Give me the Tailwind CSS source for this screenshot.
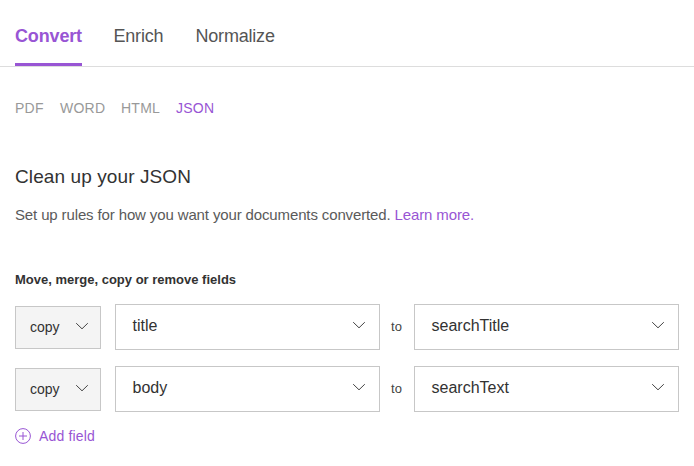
<!DOCTYPE html>
<html lang="en"><head><meta charset="utf-8"><title>Convert</title>
<script src="https://cdn.jsdelivr.net/npm/@tailwindcss/browser@4"></script></head>
<body class="w-[694px] h-[466px] overflow-hidden bg-white font-['Liberation_Sans',Arial,sans-serif] text-[#555]">
<svg class="hidden"><symbol id="chevron" viewBox="0 0 14 8"><path d="M1.2 1.2L7 6.8l5.8-5.6" fill="none" stroke="#444" stroke-width="1"/></symbol></svg>
<nav class="flex h-[67px] border-b border-[#ddd] pl-[15px] text-[18px] leading-[20px] tracking-[-0.2px]">
<a class="w-[67px] h-[66px] pt-[26px] font-bold tracking-[-0.15px] text-[#9855d4] border-b-3 border-[#9855d4]">Convert</a>
<a class="ml-[31.5px] w-[50.5px] pt-[26px]">Enrich</a><a class="ml-[31.5px] pt-[26px]">Normalize</a></nav>
<div class="flex pl-[15px] mt-[33px] text-[14px] leading-4 text-[#999] tracking-[0.25px]"><a class="w-[45px]">PDF</a><a class="w-[61px]">WORD</a><a class="w-[55px]">HTML</a><a class="text-[#9855d4]">JSON</a></div>
<h1 class="ml-[15px] mt-[49px] text-[19px] leading-6 tracking-[0.1px] text-[#323232]">Clean up your JSON</h1>
<p class="ml-[15px] mt-[16px] text-[15px] leading-5 tracking-[-0.13px] text-[#5a5a5a]">Set up rules for how you want your documents converted. <a class="text-[#9855d4]">Learn more.</a></p>
<h2 class="ml-[15px] mt-[47px] text-[13px] leading-4 font-bold text-[#323232]">Move, merge, copy or remove fields</h2>
<section class="mt-4 ml-[15px] w-[664px] flex flex-col gap-4 text-[#323232]">
<div class="flex h-[46px]">
<div class="mt-[2px] h-[43px] w-[86px] border border-[#c7c7c7] bg-[#f4f4f4] flex items-center justify-between pl-[14px] pr-[11px] text-[14px]"><span>copy</span><svg class="w-[14px] h-2 mb-[3px]"><use href="#chevron"/></svg></div>
<div class="ml-[14px] w-[265px] border border-[#c7c7c7] flex items-center justify-between pl-[16.5px] pr-[13px] text-[16px]"><span class="mb-[3px]">title</span><svg class="w-[14px] h-2 mb-[4px]"><use href="#chevron"/></svg></div>
<span class="w-[34px] pr-px text-center text-[13px] leading-[46px] text-[#444]">to</span>
<div class="w-[265px] border border-[#c7c7c7] flex items-center justify-between pl-[16.5px] pr-[13px] text-[16px]"><span class="mb-[3px]">searchTitle</span><svg class="w-[14px] h-2 mb-[4px]"><use href="#chevron"/></svg></div>
</div>
<div class="flex h-[46px]">
<div class="mt-[2px] h-[43px] w-[86px] border border-[#c7c7c7] bg-[#f4f4f4] flex items-center justify-between pl-[14px] pr-[11px] text-[14px]"><span>copy</span><svg class="w-[14px] h-2 mb-[3px]"><use href="#chevron"/></svg></div>
<div class="ml-[14px] w-[265px] border border-[#c7c7c7] flex items-center justify-between pl-[16.5px] pr-[13px] text-[16px]"><span class="mb-[3px]">body</span><svg class="w-[14px] h-2 mb-[4px]"><use href="#chevron"/></svg></div>
<span class="w-[34px] pr-px text-center text-[13px] leading-[46px] text-[#444]">to</span>
<div class="w-[265px] border border-[#c7c7c7] flex items-center justify-between pl-[16.5px] pr-[13px] text-[16px]"><span class="mb-[3px]">searchText</span><svg class="w-[14px] h-2 mb-[4px]"><use href="#chevron"/></svg></div>
</div>
</section>
<a class="ml-[15px] mt-4 flex items-center gap-2 h-4 text-[14px] leading-4 tracking-[0.17px] text-[#9855d4]"><svg class="w-4 h-4" viewBox="0 0 16 16" fill="none" stroke="currentColor"><circle cx="8" cy="8" r="7.4"/><path d="M8 4v8M4 8h8"/></svg>Add field</a>
</body></html>
